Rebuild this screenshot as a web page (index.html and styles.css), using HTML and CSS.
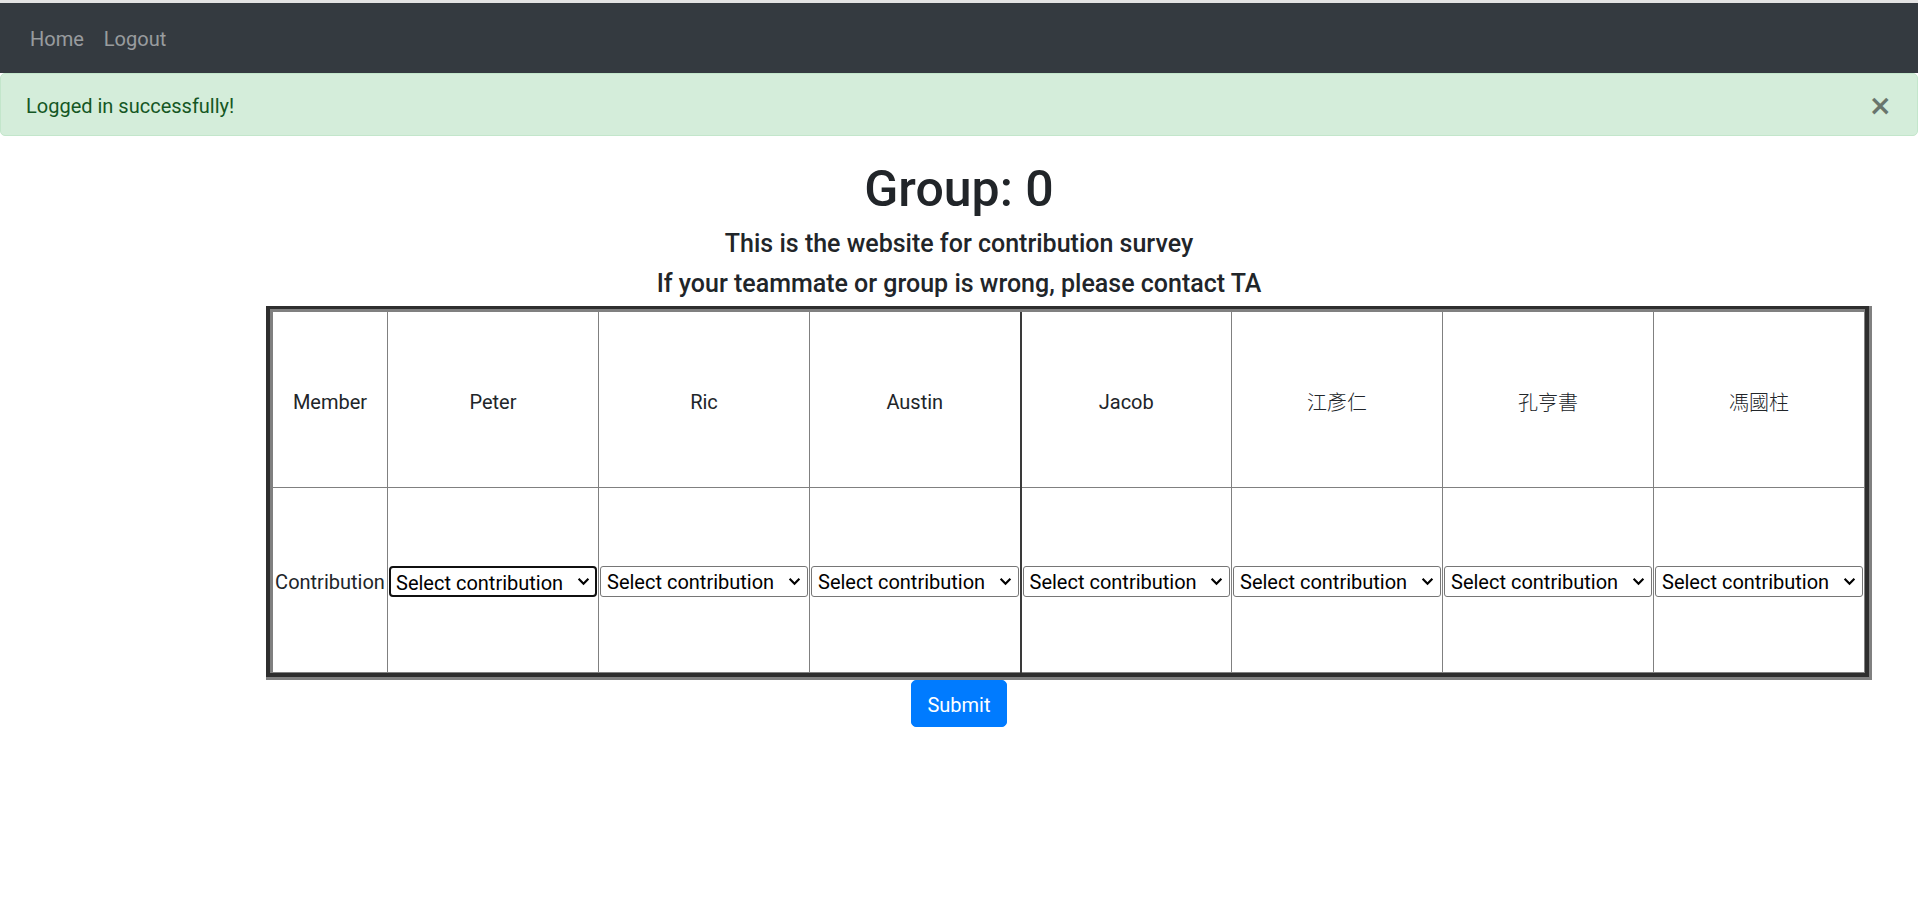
FILE: index.html
```html
<!DOCTYPE html>
<html lang="en">
<head>
<meta charset="utf-8">
<title>Contribution survey</title>
<link rel="stylesheet" href="styles.css">
</head>
<body>
<div class="top-strip"></div>
<nav class="navbar">
  <a class="nav-link" href="#">Home</a>
  <a class="nav-link" href="#">Logout</a>
</nav>
<div class="alert">
  <span>Logged in successfully!</span>
  <button class="close" type="button">&times;</button>
</div>
<main class="main">
  <h1 class="title">Group: 0</h1>
  <h5 class="subtitle">This is the website for contribution survey</h5>
  <h5 class="subtitle">If your teammate or group is wrong, please contact TA</h5>
  <div class="frame">
    <div class="frame-dark">
      <table class="grid">
        <colgroup>
          <col class="col-label">
          <col><col><col><col><col><col><col>
        </colgroup>
        <tr class="row-member">
          <td class="label">Member</td>
          <td>Peter</td>
          <td>Ric</td>
          <td>Austin</td>
          <td class="sep">Jacob</td>
          <td class="cjk">江彥仁</td>
          <td class="cjk">孔亨書</td>
          <td class="cjk">馮國柱</td>
        </tr>
        <tr class="row-contrib">
          <td class="label">Contribution</td>
          <td><span class="pick-wrap"><select class="pick focused"><option>Select contribution</option></select><svg class="chev" viewBox="0 0 12 8"><path d="M1.5 1.5 L6 6 L10.5 1.5"/></svg></span></td>
          <td><span class="pick-wrap"><select class="pick"><option>Select contribution</option></select><svg class="chev" viewBox="0 0 12 8"><path d="M1.5 1.5 L6 6 L10.5 1.5"/></svg></span></td>
          <td><span class="pick-wrap"><select class="pick"><option>Select contribution</option></select><svg class="chev" viewBox="0 0 12 8"><path d="M1.5 1.5 L6 6 L10.5 1.5"/></svg></span></td>
          <td class="sep"><span class="pick-wrap"><select class="pick"><option>Select contribution</option></select><svg class="chev" viewBox="0 0 12 8"><path d="M1.5 1.5 L6 6 L10.5 1.5"/></svg></span></td>
          <td><span class="pick-wrap"><select class="pick"><option>Select contribution</option></select><svg class="chev" viewBox="0 0 12 8"><path d="M1.5 1.5 L6 6 L10.5 1.5"/></svg></span></td>
          <td><span class="pick-wrap"><select class="pick"><option>Select contribution</option></select><svg class="chev" viewBox="0 0 12 8"><path d="M1.5 1.5 L6 6 L10.5 1.5"/></svg></span></td>
          <td><span class="pick-wrap"><select class="pick"><option>Select contribution</option></select><svg class="chev" viewBox="0 0 12 8"><path d="M1.5 1.5 L6 6 L10.5 1.5"/></svg></span></td>
        </tr>
      </table>
    </div>
  </div>
  <div class="actions">
    <button class="btn-submit" type="submit">Submit</button>
  </div>
</main>
</body>
</html>
```

FILE: styles.css
```css
* { box-sizing: border-box; }

html, body {
  margin: 0;
  padding: 0;
  background: #fff;
}

body {
  font-family: "Segoe UI", Roboto, "Noto Sans", "Noto Sans CJK TC", sans-serif;
  font-size: 20px;
  line-height: 1.5;
  color: #212529;
}

.top-strip {
  height: 3px;
  background: #e3e3e3;
}

.navbar {
  display: flex;
  align-items: center;
  height: 70px;
  padding: 11px 20px 9px;
  background: #343a40;
}

.nav-link {
  padding: 10px 10px;
  color: rgba(255, 255, 255, 0.5);
  text-decoration: none;
  line-height: 30px;
}

.alert {
  position: relative;
  display: flex;
  align-items: center;
  height: 63px;
  padding: 2px 25px 0;
  margin-bottom: 20px;
  background: #d4edda;
  border: 1px solid #c3e6cb;
  border-radius: 5px;
  color: #155724;
}

.close {
  position: absolute;
  right: 0;
  top: 0;
  height: 100%;
  padding: 2px 25px 0;
  border: 0;
  background: transparent;
  font-family: "DejaVu Sans", sans-serif;
  font-size: 28px;
  font-weight: 700;
  line-height: 1;
  color: #000;
  opacity: 0.5;
}

.main {
  display: flex;
  flex-direction: column;
}

.title {
  margin: 0 0 7px;
  padding-top: 3px;
  text-align: center;
  font-size: 50px;
  font-weight: 500;
  line-height: 60px;
}

.subtitle {
  margin: 0 0 7px;
  padding-top: 3px;
  text-align: center;
  font-size: 25px;
  font-weight: 500;
  line-height: 30px;
}

.frame {
  align-self: flex-start;
  margin-left: 266px;
  width: 1606px;
  border-right: 3px solid #808080;
  border-bottom: 3px solid #808080;
}

.frame-dark {
  border: 4px solid #2e2e2e;
  border-top-width: 3px;
}

.grid {
  width: 100%;
  border-collapse: collapse;
  border-top: 3px solid #808080;
  border-left: 3px solid #808080;
  table-layout: fixed;
}

.col-label {
  width: 116px;
}

.grid td {
  padding: 4px 1px 0;
  border: 1px solid #808080;
  text-align: center;
  vertical-align: middle;
}

.grid td.sep {
  border-left: 2px solid #3a3a3a;
}

.row-member td {
  height: 177px;
}

.row-contrib td {
  height: 185px;
}

.cjk {
  font-family: "Noto Sans CJK TC", "Noto Sans", sans-serif;
  font-weight: 300;
}

.pick-wrap {
  position: relative;
  display: block;
  margin-top: -2px;
}

.pick {
  display: block;
  width: 100%;
  height: 31px;
  margin: 0;
  padding: 2px 28px 0 6px;
  font-family: inherit;
  font-size: 20px;
  line-height: 26px;
  color: #000;
  background: #fff;
  border: 1px solid #767676;
  border-radius: 3px;
  appearance: none;
  -webkit-appearance: none;
  text-align: left;
}

.pick.focused {
  border: 2px solid #101010;
  border-radius: 4px;
  padding-left: 5px;
}

.chev {
  position: absolute;
  right: 7px;
  top: 11px;
  width: 13px;
  height: 9px;
  fill: none;
  stroke: #000;
  stroke-width: 2;
  pointer-events: none;
}

.actions {
  display: flex;
  justify-content: center;
}

.btn-submit {
  height: 47px;
  padding: 2px 15px 0;
  font-family: inherit;
  font-size: 20px;
  line-height: 30px;
  color: #fff;
  background: #007bff;
  border: 1px solid #007bff;
  border-radius: 5px;
}
```
